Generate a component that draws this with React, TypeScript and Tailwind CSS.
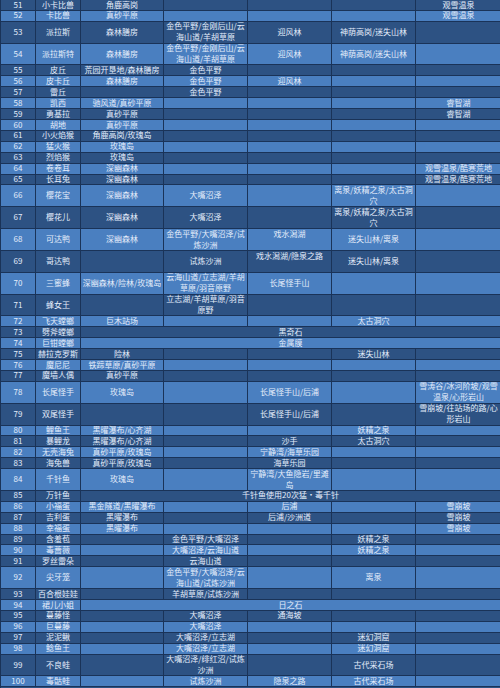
type Row = { n: number; name: string; cells?: string[]; span?: string };

// cells: 黑曜原野 / 红莲湿地 / 群青海岸 / 天冠山麓 / 纯白冻土
// "\n" breaks a line, a leading "^" keeps the text at the top of a tall row
const rows: Row[] = [
  { n: 51, name: "小卡比兽", cells: ["角鹿高岗", "", "", "", "观雪温泉"] },
  { n: 52, name: "卡比兽", cells: ["真砂平原", "", "", "", "观雪温泉"] },
  { n: 53, name: "派拉斯", cells: ["森林膳房", "金色平野/金刚后山/云\n海山道/羊胡草原", "迎风林", "神荫高岗/迷失山林", ""] },
  { n: 54, name: "派拉斯特", cells: ["森林膳房", "金色平野/金刚后山/云\n海山道/羊胡草原", "迎风林", "神荫高岗/迷失山林", ""] },
  { n: 55, name: "皮丘", cells: ["荒园开垦地/森林膳房", "金色平野", "", "", ""] },
  { n: 56, name: "皮卡丘", cells: ["森林膳房", "金色平野", "迎风林", "", ""] },
  { n: 57, name: "雷丘", cells: ["", "金色平野", "", "", ""] },
  { n: 58, name: "凯西", cells: ["驰风道/真砂平原", "", "", "", "睿智湖"] },
  { n: 59, name: "勇基拉", cells: ["真砂平原", "", "", "", "睿智湖"] },
  { n: 60, name: "胡地", cells: ["真砂平原", "", "", "", ""] },
  { n: 61, name: "小火焰猴", cells: ["角鹿高岗/玫瑰岛", "", "", "", ""] },
  { n: 62, name: "猛火猴", cells: ["玫瑰岛", "", "", "", ""] },
  { n: 63, name: "烈焰猴", cells: ["玫瑰岛", "", "", "", ""] },
  { n: 64, name: "卷卷耳", cells: ["深幽森林", "", "", "", "观雪温泉/酷寒荒地"] },
  { n: 65, name: "长耳兔", cells: ["深幽森林", "", "", "", "观雪温泉/酷寒荒地"] },
  { n: 66, name: "樱花宝", cells: ["深幽森林", "大嘴沼泽", "", "离泉/妖精之泉/太古洞\n穴", ""] },
  { n: 67, name: "樱花儿", cells: ["深幽森林", "大嘴沼泽", "", "离泉/妖精之泉/太古洞\n穴", ""] },
  { n: 68, name: "可达鸭", cells: ["深幽森林", "金色平野/大嘴沼泽/试\n炼沙洲", "^戏水潟湖", "迷失山林/离泉", ""] },
  { n: 69, name: "哥达鸭", cells: ["", "试炼沙洲", "^戏水潟湖/隐泉之路", "迷失山林/离泉", ""] },
  { n: 70, name: "三蜜蜂", cells: ["深幽森林/险林/玫瑰岛", "云海山道/立志湖/羊胡\n草原/羽音原野", "长尾怪手山", "", ""] },
  { n: 71, name: "蜂女王", cells: ["", "立志湖/羊胡草原/羽音\n原野", "", "", ""] },
  { n: 72, name: "飞天螳螂", cells: ["巨木站场", "", "", "太古洞穴", ""] },
  { n: 73, name: "劈斧螳螂", span: "黑奇石" },
  { n: 74, name: "巨钳螳螂", span: "金属膜" },
  { n: 75, name: "赫拉克罗斯", cells: ["险林", "", "", "迷失山林", ""] },
  { n: 76, name: "魔尼尼", cells: ["铁蹄草原/真砂平原", "", "", "", ""] },
  { n: 77, name: "魔墙人偶", cells: ["真砂平原", "", "", "", ""] },
  { n: 78, name: "长尾怪手", cells: ["玫瑰岛", "", "长尾怪手山/后浦", "", "雪涛谷/冰河阶坡/观雪\n温泉/心形岩山"] },
  { n: 79, name: "双尾怪手", cells: ["", "", "长尾怪手山/后浦", "", "雪崩坡/往站场的路/心\n形岩山"] },
  { n: 80, name: "鲤鱼王", cells: ["黑曜瀑布/心齐湖", "", "", "妖精之泉", ""] },
  { n: 81, name: "暴鲤龙", cells: ["黑曜瀑布/心齐湖", "", "沙手", "太古洞穴", ""] },
  { n: 82, name: "无壳海兔", cells: ["真砂平原/玫瑰岛", "", "宁静湾/海草乐园", "", ""] },
  { n: 83, name: "海兔兽", cells: ["真砂平原/玫瑰岛", "", "海草乐园", "", ""] },
  { n: 84, name: "千针鱼", cells: ["玫瑰岛", "", "宁静湾/大鱼隐岩/里滩\n岛", "", ""] },
  { n: 85, name: "万针鱼", span: "千针鱼使用20次猛·毒千针" },
  { n: 86, name: "小福蛋", cells: ["黑金隧道/黑曜瀑布", "", "后浦", "", "雪崩坡"] },
  { n: 87, name: "吉利蛋", cells: ["黑曜瀑布", "", "后浦/沙洲道", "", "雪崩坡"] },
  { n: 88, name: "幸福蛋", cells: ["黑曜瀑布", "", "", "", "雪崩坡"] },
  { n: 89, name: "含羞苞", cells: ["", "金色平野/大嘴沼泽", "", "妖精之泉", ""] },
  { n: 90, name: "毒蔷薇", cells: ["", "大嘴沼泽/云海山道", "", "妖精之泉", ""] },
  { n: 91, name: "罗丝雷朵", cells: ["", "云海山道", "", "", ""] },
  { n: 92, name: "尖牙笼", cells: ["", "金色平野/大嘴沼泽/云\n海山道/试炼沙洲", "", "离泉", ""] },
  { n: 93, name: "百合根娃娃", cells: ["", "羊胡草原/试炼沙洲", "", "", ""] },
  { n: 94, name: "裙儿小姐", span: "日之石" },
  { n: 95, name: "蔓藤怪", cells: ["", "大嘴沼泽", "通海坡", "", ""] },
  { n: 96, name: "巨蔓藤", cells: ["", "大嘴沼泽", "", "", ""] },
  { n: 97, name: "泥泥鳅", cells: ["", "大嘴沼泽/立志湖", "", "迷幻洞窟", ""] },
  { n: 98, name: "鲶鱼王", cells: ["", "大嘴沼泽/立志湖", "", "迷幻洞窟", ""] },
  { n: 99, name: "不良蛙", cells: ["", "大嘴沼泽/绯红沼/试炼\n沙洲", "", "古代采石场", ""] },
  { n: 100, name: "毒骷蛙", cells: ["", "试炼沙洲", "隐泉之路", "古代采石场", ""] },
];

const widths = ["w-[35px]", "w-[45px]", "w-[83px]", "w-[84px]", "w-[84px]", "w-[84px]", "w-[85px]"];

function Cell({ text, w }: { text: string; w: string }) {
  const top = text.startsWith("^");
  const t = top ? text.slice(1) : text;
  return (
    <div
      className={`${w} shrink-0 flex ${top ? "items-start" : "items-center"} justify-center border-r border-[#1a3358] last:border-r-0 text-center whitespace-pre-line`}
    >
      {t}
    </div>
  );
}

export default function App() {
  return (
    <div
      className="w-[500px] h-[688px] overflow-hidden bg-[#2d5283] text-[8px] leading-[10.92px] text-[#e4edfb] border-l border-[#1a3358]"
      style={{ fontFamily: '"Noto Sans CJK SC", "Noto Sans", sans-serif' }}
    >
      {rows.map((r) => {
        const tall = (r.cells ?? []).some((c) => c.includes("\n") || c.startsWith("^"));
        const bg = r.n % 2 === 0 ? "bg-[#4a7fc0]" : "bg-[#2d5283]";
        return (
          <div
            key={r.n}
            className={`flex ${tall ? "h-[21.84px]" : "h-[10.92px]"} ${bg} border-b border-[#1a3358]`}
          >
            <Cell text={String(r.n)} w={widths[0]} />
            <Cell text={r.name} w={widths[1]} />
            {r.span ? (
              <div className="flex-1 flex items-center justify-center">{r.span}</div>
            ) : (
              r.cells!.map((c, i) => <Cell key={i} text={c} w={widths[i + 2]} />)
            )}
          </div>
        );
      })}
    </div>
  );
}
